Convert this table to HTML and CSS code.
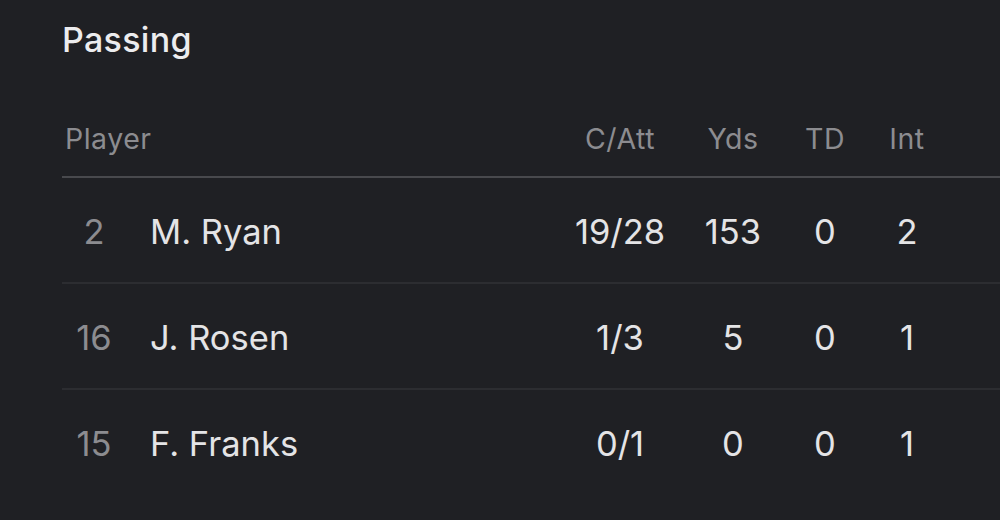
FILE: index.html
```html
<!DOCTYPE html>
<html lang="en">
<head>
<meta charset="utf-8">
<title>Passing</title>
<link rel="stylesheet" href="styles.css">
</head>
<body>
<section class="card">
  <h2 class="title">Passing</h2>
  <div class="table">
    <div class="row head">
      <div class="cell player">Player</div>
      <div class="cell num">C/Att</div>
      <div class="cell num">Yds</div>
      <div class="cell num">TD</div>
      <div class="cell num">Int</div>
    </div>
    <div class="row">
      <div class="cell player"><span class="jersey">2</span><span class="name">M. Ryan</span></div>
      <div class="cell num">19/28</div>
      <div class="cell num">153</div>
      <div class="cell num">0</div>
      <div class="cell num">2</div>
    </div>
    <div class="row">
      <div class="cell player"><span class="jersey">16</span><span class="name">J. Rosen</span></div>
      <div class="cell num">1/3</div>
      <div class="cell num">5</div>
      <div class="cell num">0</div>
      <div class="cell num">1</div>
    </div>
    <div class="row last">
      <div class="cell player"><span class="jersey">15</span><span class="name">F. Franks</span></div>
      <div class="cell num">0/1</div>
      <div class="cell num">0</div>
      <div class="cell num">0</div>
      <div class="cell num">1</div>
    </div>
  </div>
</section>
</body>
</html>
```

FILE: styles.css
```css
html, body {
  margin: 0;
  padding: 0;
  background: #1f2024;
}

body {
  width: 1000px;
  height: 520px;
  overflow: hidden;
  font-family: "Inter", "Liberation Sans", sans-serif;
  color: #e4e4e6;
}

.card {
  padding: 20px 0 0 62px;
}

.title {
  margin: 0;
  font-size: 34px;
  font-weight: 500;
  line-height: 40px;
  color: #ececee;
  letter-spacing: 0.3px;
}

.row {
  display: grid;
  grid-template-columns: 1fr 124px 102px 82px 82px 52px;
  align-items: center;
  height: 104px;
  border-bottom: 2px solid #2c2d31;
}

.row.last {
  border-bottom: none;
}

.row.head {
  height: 116px;
  align-items: end;
  border-bottom: 2px solid #48494d;
  color: #8c8c90;
  font-size: 28.5px;
  line-height: 36px;
  letter-spacing: 0.5px;
}

.row.head .cell {
  padding-bottom: 19px;
}

.row:not(.head) {
  font-size: 34.5px;
  line-height: 40px;
}

.row:not(.head) .cell {
  padding-top: 4px;
}

.cell.player {
  display: flex;
  align-items: center;
  padding-left: 3px;
}

.row:not(.head) .cell.player {
  padding-left: 0;
}

.jersey {
  width: 64px;
  text-align: center;
  color: #8c8c90;
}

.name {
  margin-left: 24px;
}

.cell.num {
  text-align: center;
}
```
